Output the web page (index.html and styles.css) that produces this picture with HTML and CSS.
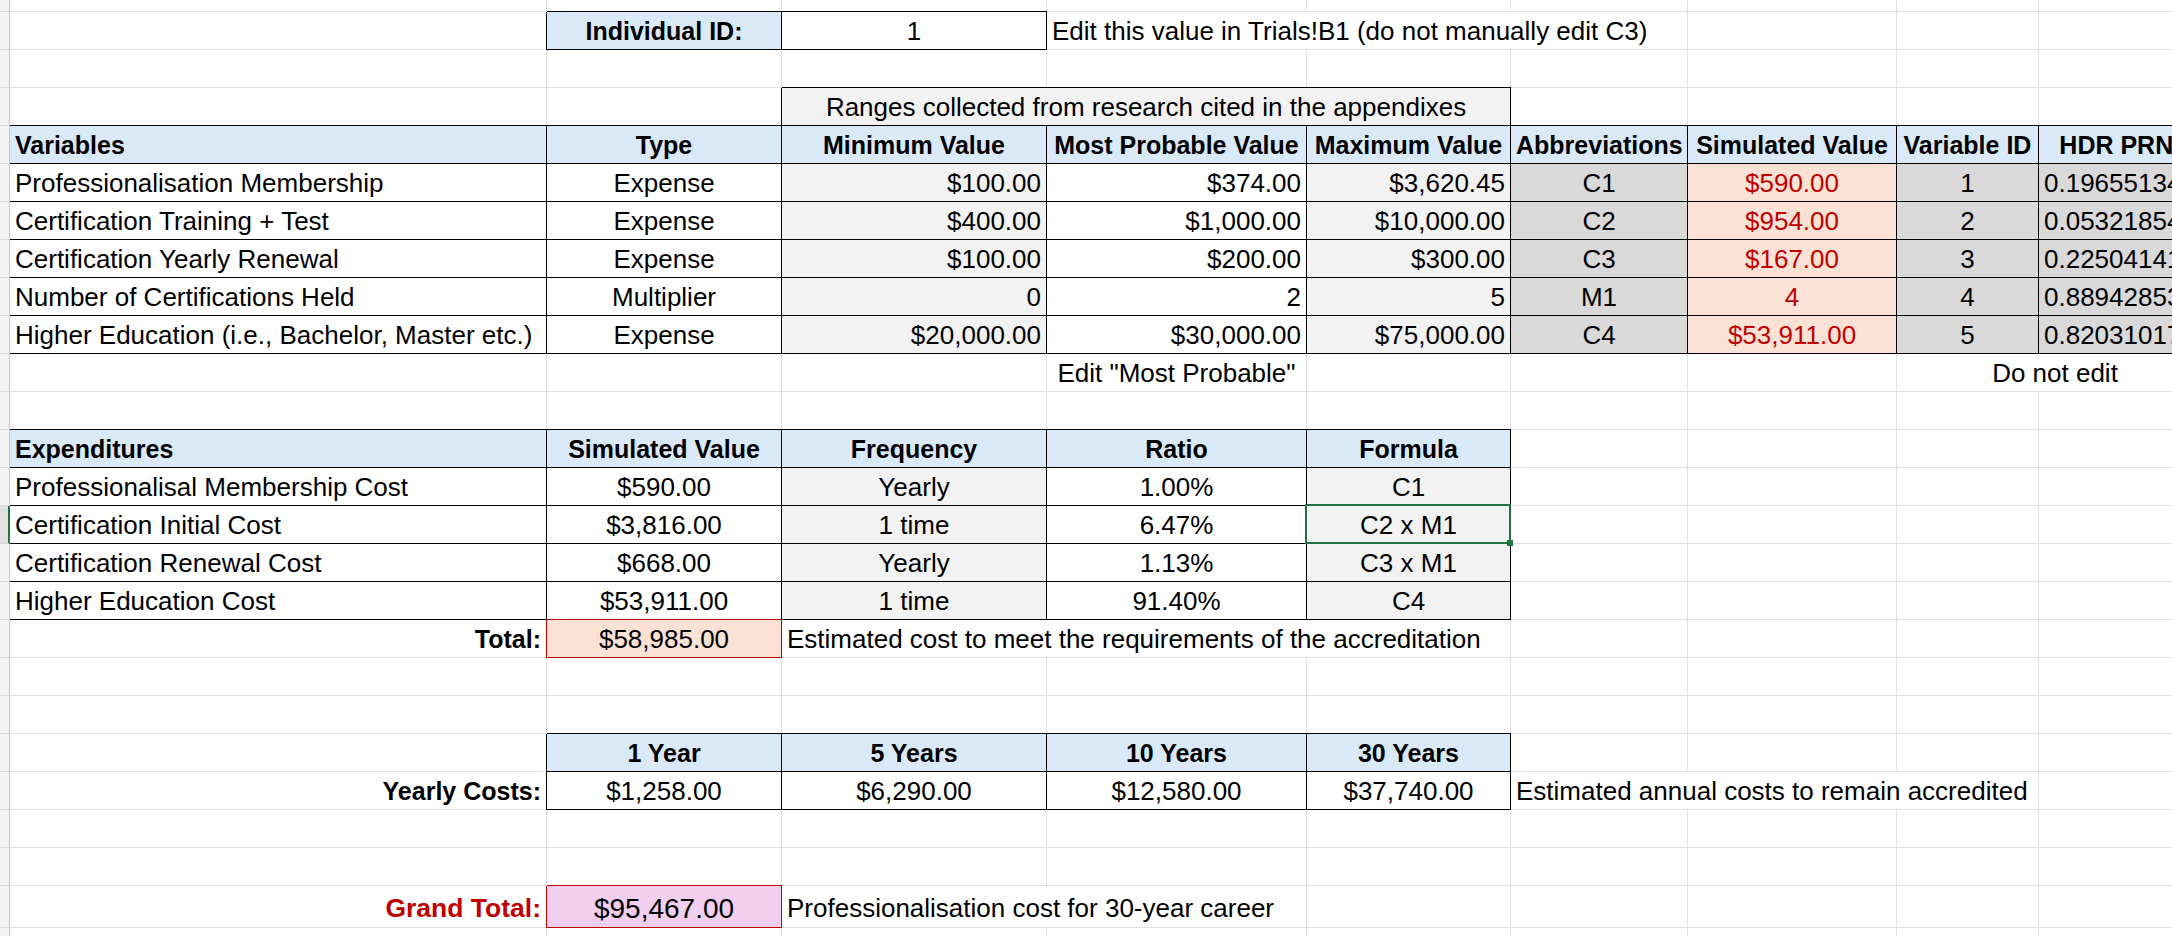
FILE: index.html
```html
<!DOCTYPE html>
<html lang="en">
<head>
<meta charset="utf-8">
<title>Professionalisation cost simulation</title>
<link rel="stylesheet" href="styles.css">
</head>
<body>
<div class="sheet">
  <!-- row 0 (partial) -->
  <div class="g"></div><div class="c"></div><div class="c"></div><div class="c"></div><div class="c"></div><div class="c"></div><div class="c"></div><div class="c"></div><div class="c"></div><div class="c"></div>
  <!-- row 1 -->
  <div class="g"></div><div class="c"></div>
  <div class="c hd b ctr">Individual ID:</div>
  <div class="c b ctr">1</div>
  <div class="c span3">Edit this value in Trials!B1 (do not manually edit C3)</div>
  <div class="c"></div><div class="c"></div><div class="c"></div>
  <!-- row 2 -->
  <div class="g"></div><div class="c"></div><div class="c"></div><div class="c"></div><div class="c"></div><div class="c"></div><div class="c"></div><div class="c"></div><div class="c"></div><div class="c"></div>
  <!-- row 3 -->
  <div class="g"></div><div class="c"></div><div class="c"></div>
  <div class="c span3 l1 b ctr">Ranges collected from research cited in the appendixes</div>
  <div class="c"></div><div class="c"></div><div class="c"></div><div class="c"></div>
  <!-- row 4 header -->
  <div class="g"></div>
  <div class="c hd b first">Variables</div>
  <div class="c hd b ctr">Type</div>
  <div class="c hd b ctr">Minimum Value</div>
  <div class="c hd b ctr">Most Probable Value</div>
  <div class="c hd b ctr">Maximum Value</div>
  <div class="c hd b ctr">Abbreviations</div>
  <div class="c hd b ctr">Simulated Value</div>
  <div class="c hd b ctr">Variable ID</div>
  <div class="c hd b ctr">HDR PRNG</div>
  <!-- row 5 -->
  <div class="g"></div>
  <div class="c b first">Professionalisation Membership</div>
  <div class="c b ctr">Expense</div>
  <div class="c b l1 rt">$100.00</div>
  <div class="c b rt">$374.00</div>
  <div class="c b l1 rt">$3,620.45</div>
  <div class="c b l2 ctr">C1</div>
  <div class="c b sal ctr red-text">$590.00</div>
  <div class="c b l2 ctr">1</div>
  <div class="c b l2">0.196551342</div>
  <!-- row 6 -->
  <div class="g"></div>
  <div class="c b first">Certification Training + Test</div>
  <div class="c b ctr">Expense</div>
  <div class="c b l1 rt">$400.00</div>
  <div class="c b rt">$1,000.00</div>
  <div class="c b l1 rt">$10,000.00</div>
  <div class="c b l2 ctr">C2</div>
  <div class="c b sal ctr red-text">$954.00</div>
  <div class="c b l2 ctr">2</div>
  <div class="c b l2">0.053218547</div>
  <!-- row 7 -->
  <div class="g"></div>
  <div class="c b first">Certification Yearly Renewal</div>
  <div class="c b ctr">Expense</div>
  <div class="c b l1 rt">$100.00</div>
  <div class="c b rt">$200.00</div>
  <div class="c b l1 rt">$300.00</div>
  <div class="c b l2 ctr">C3</div>
  <div class="c b sal ctr red-text">$167.00</div>
  <div class="c b l2 ctr">3</div>
  <div class="c b l2">0.225041418</div>
  <!-- row 8 -->
  <div class="g"></div>
  <div class="c b first">Number of Certifications Held</div>
  <div class="c b ctr">Multiplier</div>
  <div class="c b l1 rt">0</div>
  <div class="c b rt">2</div>
  <div class="c b l1 rt">5</div>
  <div class="c b l2 ctr">M1</div>
  <div class="c b sal ctr red-text">4</div>
  <div class="c b l2 ctr">4</div>
  <div class="c b l2">0.889428531</div>
  <!-- row 9 -->
  <div class="g"></div>
  <div class="c b first">Higher Education (i.e., Bachelor, Master etc.)</div>
  <div class="c b ctr">Expense</div>
  <div class="c b l1 rt">$20,000.00</div>
  <div class="c b rt">$30,000.00</div>
  <div class="c b l1 rt">$75,000.00</div>
  <div class="c b l2 ctr">C4</div>
  <div class="c b sal ctr red-text">$53,911.00</div>
  <div class="c b l2 ctr">5</div>
  <div class="c b l2">0.820310173</div>
  <!-- row 10 -->
  <div class="g"></div><div class="c"></div><div class="c"></div><div class="c"></div>
  <div class="c ctr">Edit "Most Probable"</div>
  <div class="c"></div><div class="c"></div><div class="c"></div>
  <div class="c span2 ctr">Do not edit</div>
  <!-- row 11 -->
  <div class="g"></div><div class="c"></div><div class="c"></div><div class="c"></div><div class="c"></div><div class="c"></div><div class="c"></div><div class="c"></div><div class="c"></div><div class="c"></div>
  <!-- row 12 header -->
  <div class="g"></div>
  <div class="c hd b first">Expenditures</div>
  <div class="c hd b ctr">Simulated Value</div>
  <div class="c hd b ctr">Frequency</div>
  <div class="c hd b ctr">Ratio</div>
  <div class="c hd b ctr">Formula</div>
  <div class="c"></div><div class="c"></div><div class="c"></div><div class="c"></div>
  <!-- row 13 -->
  <div class="g"></div>
  <div class="c b first">Professionalisal Membership Cost</div>
  <div class="c b ctr">$590.00</div>
  <div class="c b l1 ctr">Yearly</div>
  <div class="c b ctr">1.00%</div>
  <div class="c b l1 ctr">C1</div>
  <div class="c"></div><div class="c"></div><div class="c"></div><div class="c"></div>
  <!-- row 14 -->
  <div class="g sel-row"></div>
  <div class="c b first">Certification Initial Cost</div>
  <div class="c b ctr">$3,816.00</div>
  <div class="c b l1 ctr">1 time</div>
  <div class="c b ctr">6.47%</div>
  <div class="c b l1 ctr active">C2 x M1</div>
  <div class="c"></div><div class="c"></div><div class="c"></div><div class="c"></div>
  <!-- row 15 -->
  <div class="g"></div>
  <div class="c b first">Certification Renewal Cost</div>
  <div class="c b ctr">$668.00</div>
  <div class="c b l1 ctr">Yearly</div>
  <div class="c b ctr">1.13%</div>
  <div class="c b l1 ctr">C3 x M1</div>
  <div class="c"></div><div class="c"></div><div class="c"></div><div class="c"></div>
  <!-- row 16 -->
  <div class="g"></div>
  <div class="c b first">Higher Education Cost</div>
  <div class="c b ctr">$53,911.00</div>
  <div class="c b l1 ctr">1 time</div>
  <div class="c b ctr">91.40%</div>
  <div class="c b l1 ctr">C4</div>
  <div class="c"></div><div class="c"></div><div class="c"></div><div class="c"></div>
  <!-- row 17 -->
  <div class="g"></div>
  <div class="c bold rt">Total:</div>
  <div class="c sal rb ctr">$58,985.00</div>
  <div class="c span3">Estimated cost to meet the requirements of the accreditation</div>
  <div class="c"></div><div class="c"></div><div class="c"></div><div class="c"></div>
  <!-- row 18 -->
  <div class="g"></div><div class="c"></div><div class="c"></div><div class="c"></div><div class="c"></div><div class="c"></div><div class="c"></div><div class="c"></div><div class="c"></div><div class="c"></div>
  <!-- row 19 -->
  <div class="g"></div><div class="c"></div><div class="c"></div><div class="c"></div><div class="c"></div><div class="c"></div><div class="c"></div><div class="c"></div><div class="c"></div><div class="c"></div>
  <!-- row 20 -->
  <div class="g"></div><div class="c"></div>
  <div class="c hd b ctr">1 Year</div>
  <div class="c hd b ctr">5 Years</div>
  <div class="c hd b ctr">10 Years</div>
  <div class="c hd b ctr">30 Years</div>
  <div class="c"></div><div class="c"></div><div class="c"></div><div class="c"></div>
  <!-- row 21 -->
  <div class="g"></div>
  <div class="c bold rt">Yearly Costs:</div>
  <div class="c b ctr">$1,258.00</div>
  <div class="c b ctr">$6,290.00</div>
  <div class="c b ctr">$12,580.00</div>
  <div class="c b ctr">$37,740.00</div>
  <div class="c span3">Estimated annual costs to remain accredited</div>
  <div class="c"></div>
  <!-- row 22 -->
  <div class="g"></div><div class="c"></div><div class="c"></div><div class="c"></div><div class="c"></div><div class="c"></div><div class="c"></div><div class="c"></div><div class="c"></div><div class="c"></div>
  <!-- row 23 -->
  <div class="g"></div><div class="c"></div><div class="c"></div><div class="c"></div><div class="c"></div><div class="c"></div><div class="c"></div><div class="c"></div><div class="c"></div><div class="c"></div>
  <!-- row 24 -->
  <div class="g"></div>
  <div class="c tall bold rt red-text grand-label">Grand Total:</div>
  <div class="c tall lav rb ctr grand-value">$95,467.00</div>
  <div class="c tall span2">Professionalisation cost for 30-year career</div>
  <div class="c"></div><div class="c"></div><div class="c"></div><div class="c"></div><div class="c"></div>
  <!-- row 25 -->
  <div class="g"></div><div class="c"></div><div class="c"></div><div class="c"></div><div class="c"></div><div class="c"></div><div class="c"></div><div class="c"></div><div class="c"></div><div class="c"></div>
</div>
</body>
</html>
```
FILE: styles.css
```css
html, body {
  margin: 0;
  padding: 0;
  overflow: hidden;
  background: #ffffff;
}

.sheet {
  display: grid;
  grid-template-columns: 10px 537px 235px 265px 260px 204px 177px 209px 142px 175px;
  grid-template-rows: 12px repeat(23, 38px) 42px 38px;
  width: max-content;
  font-family: "Liberation Sans", Arial, sans-serif;
  font-size: 26px;
  color: #000000;
}

.c {
  box-sizing: border-box;
  min-width: 0;
  border-right: 1px solid #e1e1e1;
  border-bottom: 1px solid #e1e1e1;
  padding: 1px 5px 0 5px;
  line-height: 36px;
  white-space: nowrap;
}

.g {
  box-sizing: border-box;
  background: #f3f3f3;
  border-right: 1px solid #c6c6c6;
  border-bottom: 1px solid #dadada;
}

.g.sel-row {
  background: #e1e1e1;
  border-right: 2px solid #217346;
}

.span2 { grid-column: span 2; }
.span3 { grid-column: span 3; }

.ctr { text-align: center; }
.rt { text-align: right; }
.bold { font-weight: 700; font-size: 25px; }

.hd {
  background: #dae9f8;
  font-weight: 700;
  font-size: 25px;
}

.l1 { background: #f2f2f2; }
.l2 { background: #d9d9d9; }
.sal { background: #fbe2d5; }
.lav { background: #f2ceef; }

.red-text { color: #c00000; }

/* black cell border: right/bottom on the box, top/left drawn over the neighbour's gridline */
.b {
  border-right-color: #000000;
  border-bottom-color: #000000;
  box-shadow: 0 -1px 0 #000000, -1px 0 0 #000000;
}

.b.first {
  box-shadow: 0 -1px 0 #000000;
}

/* red cell border */
.rb {
  border-right-color: #c00000;
  border-bottom-color: #c00000;
  box-shadow: 0 -1px 0 #c00000, -1px 0 0 #c00000;
}

.tall {
  padding-top: 4px;
  line-height: 37px;
}

.grand-label { font-size: 26.5px; }
.grand-value { font-size: 28px; }

/* active cell selection frame */
.active {
  position: relative;
}

.active::after {
  content: "";
  position: absolute;
  left: -2px;
  top: -2px;
  right: -1px;
  bottom: -1px;
  border: 2px solid #217346;
}

.active::before {
  content: "";
  position: absolute;
  right: -3px;
  bottom: -3px;
  width: 6px;
  height: 6px;
  background: #217346;
  z-index: 1;
}
```
